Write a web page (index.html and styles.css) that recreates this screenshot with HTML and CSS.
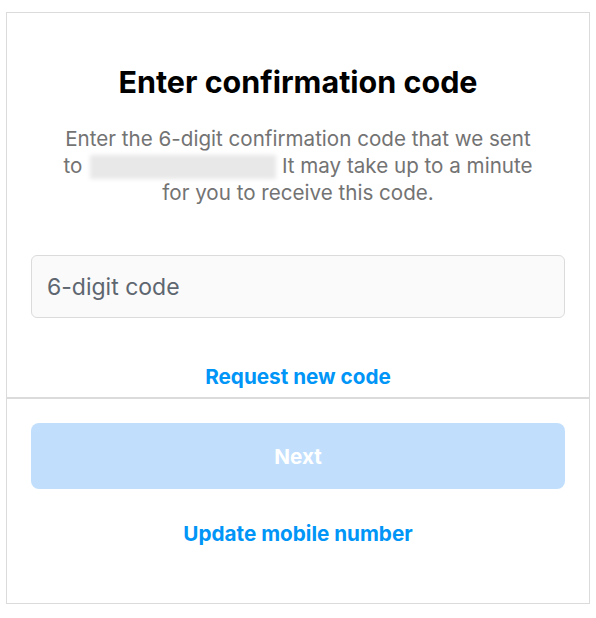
FILE: index.html
```html
<!DOCTYPE html>
<html>
<head>
<meta charset="utf-8">
<link rel="stylesheet" href="styles.css">
</head>
<body>
<div class="card">
  <div class="top">
    <h1 class="title">Enter confirmation code</h1>
    <p class="desc">Enter the 6-digit confirmation code that we sent to <span class="blur"></span> It may take up to a minute for you to receive this code.</p>
    <div class="field"><input class="input" type="text" placeholder="6-digit code"></div>
    <div class="link link-request">Request new code</div>
  </div>
  <div class="bottom">
    <button class="next" type="button">Next</button>
    <div class="link link-update">Update mobile number</div>
  </div>
</div>
</body>
</html>
```
FILE: styles.css
```css
html, body {
  margin: 0;
  padding: 0;
  background: #ffffff;
}
body {
  font-family: Inter, "Noto Sans", "Liberation Sans", sans-serif;
}
.card {
  margin: 12px 6px 0 6px;
  height: 590px;
  border: 1px solid #dbdbdb;
  display: flex;
  flex-direction: column;
}
.top {
  padding: 52px 24px 8px 24px;
  text-align: center;
  border-bottom: 2px solid #dbdbdb;
}
.title {
  margin: 0;
  font-size: 30.5px;
  line-height: 34px;
  font-weight: 700;
  color: #000;
}
.desc {
  margin: 26px 30px 0 30px;
  font-size: 20.6px;
  line-height: 27px;
  color: #737373;
}
.blur {
  display: inline-block;
  width: 186px;
  height: 24px;
  vertical-align: -6px;
  background: #e8e8e8;
  filter: blur(2px);
  margin: 0 0 0 2px;
}
.field {
  margin-top: 49px;
}
.input {
  display: block;
  width: 100%;
  box-sizing: border-box;
  height: 63px;
  border: 1px solid #dbdbdb;
  border-radius: 6px;
  background: #fafafa;
  padding: 0 15px;
  font-family: inherit;
  font-size: 23px;
  color: #262626;
  outline: none;
}
.input::placeholder {
  color: #5e6670;
}
.link {
  font-size: 20.7px;
  line-height: 24px;
  font-weight: 700;
  color: #0095f6;
  text-align: center;
}
.link-request {
  margin-top: 47px;
}
.bottom {
  padding: 24px 24px 0 24px;
}
.next {
  display: block;
  width: 100%;
  height: 66px;
  border: none;
  border-radius: 8px;
  background: #c1dffd;
  color: #ffffff;
  font-family: inherit;
  font-size: 20.7px;
  font-weight: 700;
}
.link-update {
  margin-top: 33px;
}
```
